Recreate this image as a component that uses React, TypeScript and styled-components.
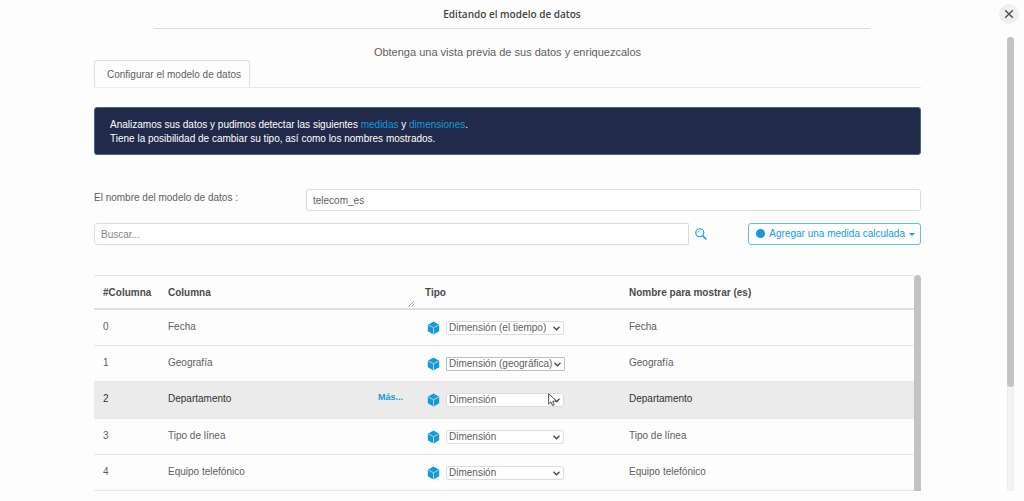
import React, { useState } from "react";
import styled, { createGlobalStyle, css } from "styled-components";

const blue = "#149bd7";

const GlobalStyle = createGlobalStyle`
  * { box-sizing: border-box; }
  body {
    margin: 0;
    background: #fdfdfd;
    color: #606060;
    font: 10px/14px "Liberation Sans", Arial, sans-serif;
  }
  input, select, button { font: inherit; color: inherit; margin: 0; }
`;

const Dialog = styled.div`
  display: flex;
  flex-direction: column;
  height: 100vh;
  min-height: 500px;
  padding-bottom: 10px;
`;

const Header = styled.header`
  position: relative;
  flex: none;
  height: 37px;
  padding: 0 15%;
`;

const Title = styled.h1`
  height: 29px;
  margin: 0;
  padding-top: 6px;
  border-bottom: 1px solid #dcdcdc;
  color: #444;
  font: 600 10px/16px "Open Sans", "Noto Sans", sans-serif;
  text-align: center;
`;

const CloseButton = styled.button`
  position: absolute;
  top: 4px;
  right: 5px;
  display: grid;
  place-items: center;
  width: 20px;
  height: 20px;
  padding: 0;
  border: 0;
  border-radius: 50%;
  background: #f0f0f0;
  color: #555;
`;

const Body = styled.div`
  flex: 1;
  display: flex;
  min-height: 0;
  padding-right: 10px;
`;

const Content = styled.main`
  flex: 1;
  display: flex;
  flex-direction: column;
  min-width: 0;
  padding: 0 86px 0 94px;
`;

const Track = styled.div<{ $filled?: boolean }>`
  flex: none;
  width: 7px;
  border-radius: ${(p) => (p.$filled ? "4px 4px 0 0" : "4px")};
  background: ${(p) => (p.$filled ? "#c3c3c3" : "#f3f3f3")};
  box-shadow: ${(p) => (p.$filled ? "none" : "inset 0 0 0 1px #ececec")};
`;

const Thumb = styled.div`
  height: 77%;
  border-radius: 4px;
  background: #c3c3c3;
`;

const Subtitle = styled.p`
  margin: 0;
  padding-top: 7px;
  font-size: 11px;
  line-height: 16px;
  text-align: center;
`;

const Tabs = styled.nav`
  display: flex;
  border-bottom: 1px solid #e8e8e8;
`;

const Tab = styled.a`
  margin-bottom: -1px;
  padding: 7px 8px 5px 12px;
  border: 1px solid #dedede;
  border-bottom-color: #ededed;
  border-radius: 3px 3px 0 0;
  color: inherit;
  text-decoration: none;
`;

const Banner = styled.p`
  margin: 19px 0 34px;
  padding: 10px 15px 8px;
  border: 1px solid #47678a;
  border-radius: 3px;
  background: #222a4b;
  color: #fff;
`;

const BannerLink = styled.a`
  color: ${blue};
  text-decoration: none;
`;

const field = css`
  height: 22px;
  padding: 0 6px;
  border: 1px solid #dcdcdc;
  border-radius: 3px;
  background: #fff;
  outline: 0;
`;

const NameRow = styled.div`
  display: flex;
  margin-bottom: 12px;
`;

const NameLabel = styled.label`
  width: 212px;
  padding-top: 2px;
`;

const NameInput = styled.input`
  ${field}
  flex: 1;
  min-width: 0;
`;

const SearchRow = styled.div`
  display: flex;
  align-items: center;
  margin-bottom: 30px;
`;

const SearchInput = styled.input`
  ${field}
  flex: 1;
  min-width: 0;
  border-radius: 3px 0 0 3px;
  &::placeholder { color: #7d868c; opacity: 1; }
`;

const SearchButton = styled.button`
  display: grid;
  place-items: center;
  width: 24px;
  height: 22px;
  margin-right: 35px;
  padding: 0;
  border: 0;
  background: none;
  color: ${blue};
`;

const MeasureButton = styled.button`
  display: flex;
  align-items: center;
  gap: 4px;
  height: 22px;
  padding: 0 5px 0 7px;
  border: 1px solid #5fbde6;
  border-radius: 3px;
  background: #fff;
  color: ${blue};
  white-space: nowrap;
`;

const Dot = styled.span`
  width: 9px;
  height: 9px;
  margin-bottom: 2px;
  border-radius: 50%;
  background: ${blue};
`;

const Caret = styled.span`
  border: 3px solid transparent;
  border-top-color: ${blue};
  border-bottom: 0;
`;

const TablePanel = styled.div`
  flex: 1;
  display: flex;
  min-height: 0;
`;

const TableArea = styled.div`
  flex: 1;
  min-width: 0;
`;

const Table = styled.table`
  width: 100%;
  height: 100%;
  border-collapse: separate;
  border-spacing: 0;
  table-layout: fixed;
`;

const HeadCell = styled.th<{ $width?: number }>`
  position: relative;
  width: ${(p) => (p.$width ? `${p.$width}px` : "auto")};
  height: 35px;
  padding: 1px 9px 0;
  border-top: 1px solid #e2e2e2;
  border-bottom: 2px solid #dfdfdf;
  color: #4c4c4c;
  text-align: left;
`;

const Grip = styled.svg`
  position: absolute;
  right: 1px;
  bottom: 1px;
`;

const Row = styled.tr<{ $active?: boolean }>`
  background: ${(p) => (p.$active ? "#ebebeb" : "transparent")};
  color: ${(p) => (p.$active ? "#333" : "inherit")};
`;

const Cell = styled.td`
  padding: 10px 9px 0;
  border-bottom: 1px solid #e6e6e6;
  vertical-align: top;
`;

const NameCell = styled.div`
  display: flex;
  justify-content: space-between;
`;

const More = styled.a`
  margin-right: 4px;
  color: ${blue};
  font-size: 9px;
  font-weight: bold;
  line-height: 10px;
  text-decoration: none;
`;

const TypeCell = styled.div`
  display: flex;
  align-items: center;
  gap: 6px;
  height: 16px;
  padding-left: 2px;
`;

const SelectBox = styled.div`
  position: relative;
  display: flex;
`;

const Select = styled.select<{ $focused?: boolean }>`
  appearance: none;
  width: ${(p) => (p.$focused ? 119 : 118)}px;
  height: 14px;
  padding: 0 2px;
  border: 1px solid ${(p) => (p.$focused ? "#b9c0c0" : "#dcdcdc")};
  border-radius: ${(p) => (p.$focused ? 1 : 3)}px;
  background: #fff;
  color: #606060;
  line-height: 12px;
  outline: 0;
`;

const Chevron = styled.svg`
  position: absolute;
  top: 5px;
  right: 4px;
  pointer-events: none;
`;

const Pointer = styled.svg`
  position: absolute;
  top: 0;
  left: 102px;
  pointer-events: none;
`;

const Cube = () => (
  <svg width="13" height="14" viewBox="0 0 13 14" aria-hidden="true">
    <path d="M6.5 .6 12.2 3.7v6.5L6.5 13.4.8 10.2V3.7z" fill={blue} />
    <path d="M1.2 4 6.5 6.7 11.8 4M6.5 6.7v6.4" fill="none" stroke="#b4dff4" strokeWidth=".9" />
  </svg>
);

const options = ["Dimensión", "Dimensión (el tiempo)", "Dimensión (geográfica)", "Medida"];

const columns = [
  { name: "Fecha", type: "Dimensión (el tiempo)" },
  { name: "Geografía", type: "Dimensión (geográfica)", focused: true },
  { name: "Departamento", type: "Dimensión", active: true },
  { name: "Tipo de línea", type: "Dimensión" },
  { name: "Equipo telefónico", type: "Dimensión" },
];

export default function App() {
  const [modelName, setModelName] = useState("telecom_es");
  return (
    <>
      <GlobalStyle />
      <Dialog role="dialog" aria-labelledby="title">
        <Header>
          <Title id="title">Editando el modelo de datos</Title>
          <CloseButton aria-label="Cerrar">
            <svg width="10" height="10" viewBox="0 0 10 10" aria-hidden="true">
              <path d="M1.2 1.2 8.8 8.8M8.8 1.2 1.2 8.8" stroke="currentColor" strokeWidth="1.5" />
            </svg>
          </CloseButton>
        </Header>
        <Body>
          <Content>
            <Subtitle>Obtenga una vista previa de sus datos y enriquezcalos</Subtitle>
            <Tabs>
              <Tab href="#configurar">Configurar el modelo de datos</Tab>
            </Tabs>
            <Banner>
              Analizamos sus datos y pudimos detectar las siguientes{" "}
              <BannerLink href="#medidas">medidas</BannerLink> y{" "}
              <BannerLink href="#dimensiones">dimensiones</BannerLink>.
              <br />
              Tiene la posibilidad de cambiar su tipo, así como los nombres mostrados.
            </Banner>
            <NameRow>
              <NameLabel htmlFor="model-name">El nombre del modelo de datos :</NameLabel>
              <NameInput
                id="model-name"
                value={modelName}
                onChange={(e) => setModelName(e.target.value)}
              />
            </NameRow>
            <SearchRow>
              <SearchInput type="text" placeholder="Buscar..." aria-label="Buscar" />
              <SearchButton aria-label="Buscar">
                <svg width="12" height="12" viewBox="0 0 12 12" fill="none" stroke="currentColor" aria-hidden="true">
                  <circle cx="4.8" cy="4.8" r="4" strokeWidth="1.1" />
                  <path d="M7.8 7.8 11.4 11.4" strokeWidth="1.4" />
                  <path d="M2.7 4.8a2.1 2.1 0 0 1 2.1-2.1" strokeWidth=".7" />
                </svg>
              </SearchButton>
              <MeasureButton>
                <Dot />
                Agregar una medida calculada
                <Caret />
              </MeasureButton>
            </SearchRow>
            <TablePanel>
              <TableArea>
                <Table>
                  <thead>
                    <tr>
                      <HeadCell $width={65}>#Columna</HeadCell>
                      <HeadCell $width={257}>
                        Columna
                        <Grip width="7" height="7" viewBox="0 0 7 7" aria-hidden="true">
                          <path d="M.5 6.5 6 1M3.5 6.5 6.5 3.5" stroke="#888" strokeWidth=".8" />
                        </Grip>
                      </HeadCell>
                      <HeadCell $width={204}>Tipo</HeadCell>
                      <HeadCell>Nombre para mostrar (es)</HeadCell>
                    </tr>
                  </thead>
                  <tbody>
                    {columns.map((column, index) => (
                      <Row key={column.name} $active={column.active}>
                        <Cell>{index}</Cell>
                        <Cell>
                          <NameCell>
                            {column.name}
                            {column.active && <More href="#mas">Más...</More>}
                          </NameCell>
                        </Cell>
                        <Cell>
                          <TypeCell>
                            <Cube />
                            <SelectBox>
                              <Select
                                aria-label={`Tipo de ${column.name}`}
                                defaultValue={column.type}
                                $focused={column.focused}
                              >
                                {options.map((option) => (
                                  <option key={option}>{option}</option>
                                ))}
                              </Select>
                              <Chevron width="7" height="5" viewBox="0 0 7 5" aria-hidden="true">
                                <path d="M.5 .8 3.5 3.8 6.5 .8" fill="none" stroke="#444" strokeWidth="1.3" />
                              </Chevron>
                              {column.active && (
                                <Pointer width="9" height="13" viewBox="0 0 9 13" aria-hidden="true">
                                  <path
                                    d="M.6 .6V11L3 8.8 4.6 12.5 6.2 11.8 4.7 8.2H8.4z"
                                    fill="#fff"
                                    stroke="#555"
                                    strokeWidth="1"
                                  />
                                </Pointer>
                              )}
                            </SelectBox>
                          </TypeCell>
                        </Cell>
                        <Cell>{column.name}</Cell>
                      </Row>
                    ))}
                  </tbody>
                </Table>
              </TableArea>
              <Track $filled />
            </TablePanel>
          </Content>
          <Track>
            <Thumb />
          </Track>
        </Body>
      </Dialog>
    </>
  );
}
